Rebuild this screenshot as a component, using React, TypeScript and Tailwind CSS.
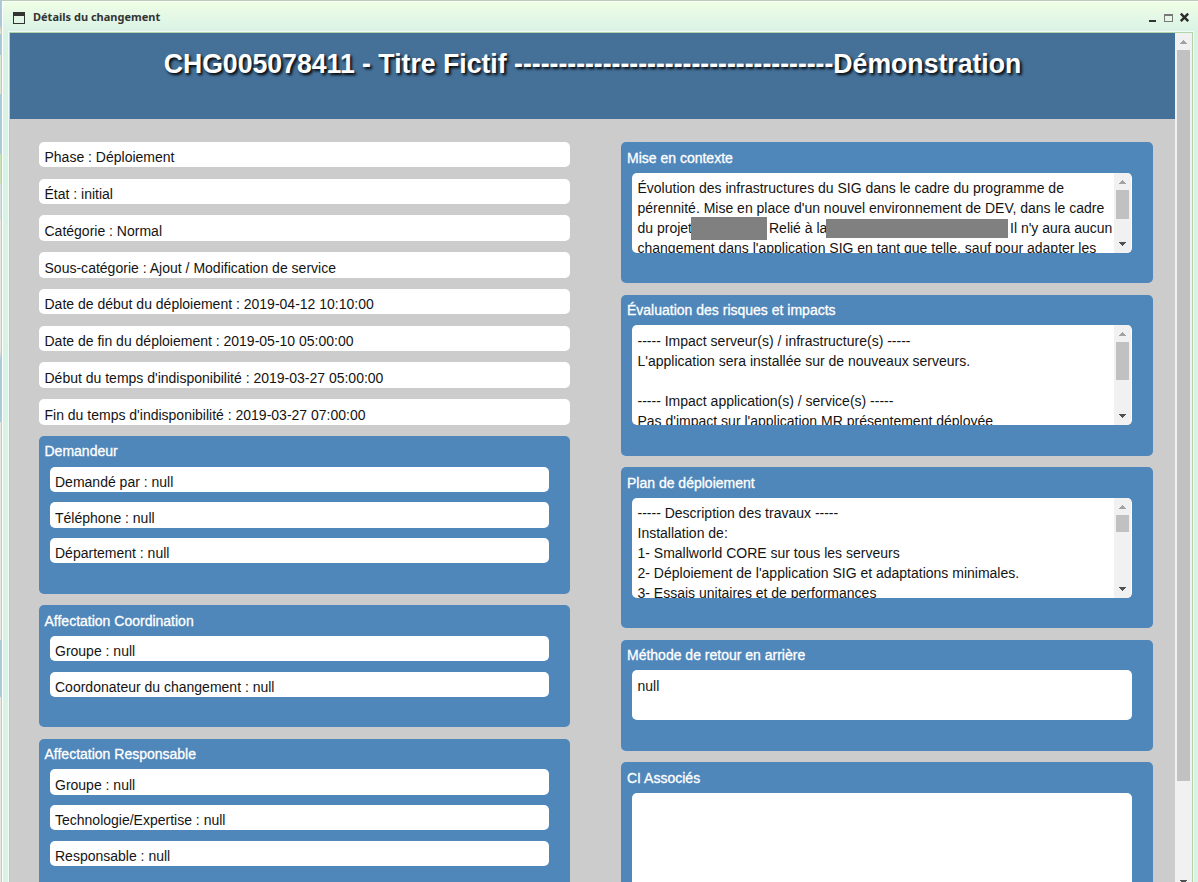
import React from "react";

type FieldData = { text: string; box: string };

const details: FieldData[] = [
  { text: "Phase : Déploiement", box: "mb-[12px] h-[25px]" },
  { text: "État : initial", box: "mb-[11px] h-[25px]" },
  { text: "Catégorie : Normal", box: "mb-[11px] h-[26px] pt-[6px]" },
  { text: "Sous-catégorie : Ajout / Modification de service", box: "mb-[11px] h-[26px] pt-[6px] tracking-[0.01px]" },
  { text: "Date de début du déploiement : 2019-04-12 10:10:00", box: "mb-[12px] h-[25px]" },
  { text: "Date de fin du déploiement : 2019-05-10 05:00:00", box: "mb-[11px] h-[25px]" },
  { text: "Début du temps d'indisponibilité : 2019-03-27 05:00:00", box: "mb-[11px] h-[26px] pt-[6px]" },
  { text: "Fin du temps d'indisponibilité : 2019-03-27 07:00:00", box: "mb-[11px] h-[26px] pt-[6px]" },
];

const requester: FieldData[] = [
  { text: "Demandé par : null", box: "mb-[10px] h-[25px]" },
  { text: "Téléphone : null", box: "mb-[10px] h-[26px] pt-[6px]" },
  { text: "Département : null", box: "h-[25px]" },
];

const coordination: FieldData[] = [
  { text: "Groupe : null", box: "mb-[11px] h-[25px]" },
  { text: "Coordonateur du changement : null", box: "h-[25px]" },
];

const owner: FieldData[] = [
  { text: "Groupe : null", box: "mb-[10px] h-[26px] pt-[6px]" },
  { text: "Technologie/Expertise : null", box: "mb-[11px] h-[25px]" },
  { text: "Responsable : null", box: "h-[25px]" },
];

function Field({ text, box, nested = false }: FieldData & { nested?: boolean }) {
  const top = box.includes("pt-") ? "" : "pt-[5px]";
  const left = nested ? "pl-[5px]" : "pl-[5.5px]";
  return (
    <div className={`shrink-0 overflow-hidden rounded-[5px] bg-white leading-5 whitespace-nowrap ${top} ${left} ${box}`}>
      {text}
    </div>
  );
}

type PanelProps = { title: string; className: string; heading?: string; children: React.ReactNode };

function Panel({ title, className, heading = "pt-[5px]", children }: PanelProps) {
  return (
    <section className={`shrink-0 rounded-[5px] bg-[#5087ba] pr-[21px] pl-[11px] ${className}`}>
      <h2 className={`-ml-[5.5px] h-[31px] leading-5 text-white [-webkit-text-stroke:0.3px_white] ${heading}`}>{title}</h2>
      {children}
    </section>
  );
}

function Arrow({ up = false }: { up?: boolean }) {
  return (
    <svg width="7" height="4" viewBox="0 0 7 4" shapeRendering="crispEdges" className="shrink-0">
      {up ? (
        <path d="M3 0h1v1h1v1h1v1h1v1H0V3h1V2h1V1h1z" fill="#a3a3a3" />
      ) : (
        <path d="M0 0h7v1H6v1H5v1H4v1H3V3H2V2H1V1H0z" fill="#505050" />
      )}
    </svg>
  );
}

function ScrollBox({ className, thumb, children }: { className: string; thumb: string; children: React.ReactNode }) {
  return (
    <div className={`flex overflow-hidden rounded-[5px] bg-white pr-px ${className}`}>
      <div className="min-w-0 flex-1 pt-[5px] pl-[5.5px] leading-5 whitespace-pre">{children}</div>
      <div className="flex w-[17px] shrink-0 flex-col items-center bg-[#f1f1f1]">
        <div className="flex h-[17px] items-center justify-center pt-[1px]"><Arrow up /></div>
        <div className={`w-[13px] bg-[#c1c1c1] ${thumb}`} />
        <div className="mt-auto flex h-[17px] items-center justify-center pb-[2px]"><Arrow /></div>
      </div>
    </div>
  );
}

function Redacted({ className }: { className: string }) {
  return <span className={`inline-block bg-[#808080] ${className}`} />;
}

export default function App() {
  return (
    <div className="flex h-[882px] w-[1198px] overflow-hidden bg-[#d9f2e6] font-['Liberation_Sans',Arial,sans-serif] text-[14px] text-[#141414]">
      <div className="w-px shrink-0 bg-[linear-gradient(to_bottom,#a9c6d4_0px,#a9c6d4_27px,#d4d4bd_27px,#e3e8da_34px,#a9c6d4_34px,#a9c6d4_55px,#dce5d4_55px,#dce5d4_94px,#a9cbd8_94px,#a9cbd8_154px,#c7e2b7_154px,#c7e2b7_184px,#d3e4df_184px,#d3e4df_220px,#e7eadf_220px,#e7eadf_350px,#a9cbd8_360px,#a9cbd8_422px,#e7eadf_422px,#e7eadf_640px,#a9cbd8_640px,#a9cbd8_697px,#e7eadf_697px)]" />
      <div className="flex min-w-0 flex-1 flex-col border-t border-l border-[#b7cfb5]">
        <header className="flex h-[30px] shrink-0 items-center border-t border-l border-white bg-linear-to-b from-[#effee5] to-[#d9f2e6] pr-[9px] pl-[10px]">
          <svg width="12" height="12" viewBox="0 0 12 12" shapeRendering="crispEdges" className="mt-[3px]">
            <path d="M0 0h12v12H0zM1 4v7h10V4z" fill="#333" fillRule="evenodd" />
          </svg>
          <h1 className="ml-[8px] font-['Noto_Sans','Open_Sans',sans-serif] text-[11px] leading-4 font-bold text-[#333]">
            Détails du changement
          </h1>
          <svg width="40" height="12" viewBox="0 0 40 12" className="mt-[3px] ml-auto">
            <path d="M0 8h7v2H0z" fill="#333" />
            <path d="M15 2h9v8h-9zM16 4v5h7V4z" fill="#777" fillRule="evenodd" />
            <path d="M31.8 1.6l7.4 7.6M39.2 1.6l-7.4 7.6" stroke="#2b2b2b" strokeWidth="2.4" />
          </svg>
        </header>
        <div className="flex min-h-0 flex-1 border-l border-white pr-[4px] pl-[5px]">
          <div className="flex min-h-0 flex-1 border-t border-r border-l border-[#f1fcf4]">
            <div className="flex min-h-0 flex-1 border-t border-r border-l border-[#b3d4a9]">
              <main className="flex w-[1165px] shrink-0 flex-col overflow-hidden bg-[#ccc]">
                <div className="h-[86px] shrink-0 bg-[#457199] pt-[14px] text-center">
                  <h2 className="scale-x-[0.9513] text-[28px] leading-[34px] font-bold whitespace-nowrap text-white [text-shadow:2px_2px_3px_#000]">
                    CHG005078411 - Titre Fictif ------------------------------------Démonstration
                  </h2>
                </div>
                <div className="flex min-h-0 flex-1 gap-[51px] pt-[23px] pl-[29px]">
                  <div className="flex w-[531px] shrink-0 flex-col">
                    {details.map((f) => <Field key={f.text} {...f} />)}
                    <Panel title="Demandeur" className="mb-[11px] h-[158px]">
                      {requester.map((f) => <Field key={f.text} nested {...f} />)}
                    </Panel>
                    <Panel title="Affectation Coordination" className="mb-[12px] h-[122px]" heading="pt-[6px]">
                      {coordination.map((f) => <Field key={f.text} nested {...f} />)}
                    </Panel>
                    <Panel title="Affectation Responsable" className="h-[158px]">
                      <div className="-mt-px">{owner.map((f) => <Field key={f.text} nested {...f} />)}</div>
                    </Panel>
                  </div>
                  <div className="flex w-[532px] shrink-0 flex-col">
                    <Panel title="Mise en contexte" className="mb-[12px] h-[141px]" heading="pt-[6px] pl-[0.5px]">
                      <ScrollBox className="h-[80px]" thumb="h-[29px]">
                        <div>Évolution des infrastructures du SIG dans le cadre du programme de</div>
                        <div>pérennité. Mise en place d'un nouvel environnement de DEV, dans le cadre</div>
                        <div className="flex h-5">
                          <span className="w-[53.5px] shrink-0">du projet</span>
                          <Redacted className="-mt-px h-[23px] w-[76px] shrink-0" />
                          <span className="w-[59px] shrink-0 pl-[2px]">Relié à la</span>
                          <Redacted className="mt-px h-[19px] w-[182px] shrink-0" />
                          <span className="pl-[2px]">Il n'y aura aucun</span>
                        </div>
                        <div>changement dans l'application SIG en tant que telle, sauf pour adapter les</div>
                      </ScrollBox>
                    </Panel>
                    <Panel title="Évaluation des risques et impacts" className="mb-[11px] h-[161px]" heading="pt-[5px] pl-[0.5px]">
                      <ScrollBox className="-mt-px h-[100px]" thumb="h-[38px]">
                        <div className="pt-px">{"----- Impact serveur(s) / infrastructure(s) -----\nL'application sera installée sur de nouveaux serveurs.\n\n----- Impact application(s) / service(s) -----\nPas d'impact sur l'application MR présentement déployée"}</div>
                      </ScrollBox>
                    </Panel>
                    <Panel title="Plan de déploiement" className="mb-[12px] h-[161px]" heading="pt-[6px] pl-[0.5px]">
                      <ScrollBox className="h-[100px]" thumb="h-[17px]">
                        {"----- Description des travaux -----\nInstallation de:\n1- Smallworld CORE sur tous les serveurs\n2- Déploiement de l'application SIG et adaptations minimales.\n3- Essais unitaires et de performances"}
                      </ScrollBox>
                    </Panel>
                    <Panel title="Méthode de retour en arrière" className="mb-[11px] h-[111px]" heading="pt-[5px] pl-[0.5px]">
                      <div className="-mt-px h-[50px] rounded-[5px] bg-white pt-[6px] pl-[5.5px] leading-5">null</div>
                    </Panel>
                    <Panel title="CI Associés" className="h-[160px]" heading="pt-[6px] pl-[0.5px]">
                      <div className="h-[120px] rounded-[5px] bg-white" />
                    </Panel>
                  </div>
                </div>
              </main>
              <div className="flex flex-1 flex-col items-center overflow-hidden bg-[#f1f1f1]">
                <div className="flex h-[17px] shrink-0 items-center pt-[1px]"><Arrow up /></div>
                <div className="h-[731px] w-[13px] shrink-0 bg-[#c1c1c1]" />
                <div className="mt-[99px] shrink-0"><Arrow /></div>
              </div>
            </div>
          </div>
        </div>
      </div>
    </div>
  );
}
